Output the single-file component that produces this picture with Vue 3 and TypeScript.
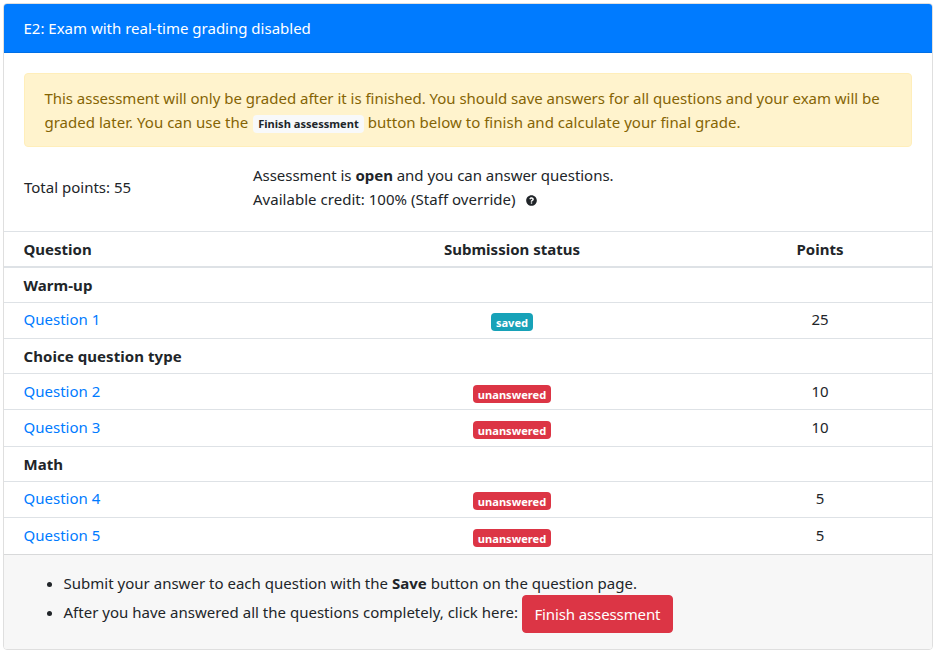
<script setup lang="ts">
interface Row {
  kind: 'category' | 'question'
  title: string
  height: number
  status?: 'saved' | 'unanswered'
  points?: number
}

const rows: Row[] = [
  { kind: 'category', title: 'Warm-up', height: 34 },
  { kind: 'question', title: 'Question 1', height: 36, status: 'saved', points: 25 },
  { kind: 'category', title: 'Choice question type', height: 35 },
  { kind: 'question', title: 'Question 2', height: 36, status: 'unanswered', points: 10 },
  { kind: 'question', title: 'Question 3', height: 37, status: 'unanswered', points: 10 },
  { kind: 'category', title: 'Math', height: 35 },
  { kind: 'question', title: 'Question 4', height: 36, status: 'unanswered', points: 5 },
  { kind: 'question', title: 'Question 5', height: 37, status: 'unanswered', points: 5 },
]
</script>

<template>
  <main class="card">
    <header class="card-header">E2: Exam with real-time grading disabled</header>

    <section class="card-body">
      <div class="alert">
        <div class="tight">This assessment will only be graded after it is finished. You should save answers for all questions and your exam will be</div>
        <div class="loose">graded later. You can use the <span class="badge light">Finish assessment</span> button below to finish and calculate your final grade.</div>
      </div>
      <div class="summary">
        <div class="total">Total points: 55</div>
        <div class="info">
          <div class="state">Assessment is <strong>open</strong> and you can answer questions.</div>
          <div class="credit">
            Available credit: 100% (Staff override)
            <svg class="help" viewBox="0 0 512 512" aria-hidden="true">
              <path fill="currentColor" d="M504 256c0 137-111 248-248 248S8 393 8 256C8 119.100 119 8 256 8s248 111.100 248 248zM262.700 110c-48 0-79 20-103 56-3.600 5.300-2.400 12.400 2.700 16.300l30 23c5.200 3.900 12.600 3 16.700-2.100 16-20 27-31 51-31 18 0 40 11.100 40 29 0 13-11 20-29 30C249 243 222 258 222 294v4c0 6.600 5.400 12 12 12h46c6.600 0 12-5.400 12-12v-1.300c0-25 74-27 74-96 0-52-54-90.700-103.300-90.700zM256 332c-22 0-40 18-40 40s18 40 40 40 40-18 40-40-18-40-40-40z" />
            </svg>
          </div>
        </div>
      </div>
    </section>

    <section class="table">
      <div class="row head">
        <div>Question</div>
        <div class="center">Submission status</div>
        <div class="center">Points</div>
      </div>
      <div
        v-for="row in rows"
        :key="row.title"
        class="row"
        :class="row.kind"
        :style="{ height: row.height + 'px' }"
      >
        <template v-if="row.kind === 'question'">
          <div><a class="link">{{ row.title }}</a></div>
          <div class="center"><span class="badge" :class="row.status">{{ row.status }}</span></div>
          <div class="center">{{ row.points }}</div>
        </template>
        <div v-else>{{ row.title }}</div>
      </div>
    </section>

    <footer class="card-footer">
      <ul>
        <li>Submit your answer to each question with the <strong>Save</strong> button on the question page.</li>
        <li>After you have answered all the questions completely, click here: <button class="btn" type="button">Finish assessment</button></li>
      </ul>
    </footer>
  </main>
</template>

<style>
body {
  background: #fff;
}
</style>

<style scoped>
* {
  box-sizing: border-box;
}
.card {
  width: 930px;
  height: 647px;
  margin: 3px 0 0 3px;
  display: flex;
  flex-direction: column;
  border: 1px solid #dfdfdf;
  border-radius: 4px;
  overflow: hidden;
  color: #212529;
  background: #fff;
  font: 15px/24px "Noto Sans", "Liberation Sans", sans-serif;
  white-space: nowrap;
}
.card-header {
  height: 49px;
  padding: 12px 19.5px;
  color: #fff;
  background: #007bff;
  border-bottom: 1px solid #006fe6;
}
.card-body {
  height: 178px;
  padding: 20px;
}
.alert {
  height: 74px;
  padding: 12px 19.4px;
  color: #856404;
  background: #fff3cd;
  border: 1px solid #ffeeba;
  border-radius: 4px;
}
.tight {
  letter-spacing: -0.018px;
}
.loose {
  letter-spacing: 0.03px;
}
.summary {
  display: flex;
  align-items: center;
  padding-top: 16px;
}
.total {
  width: 229px;
}
.state {
  letter-spacing: -0.03px;
}
.credit {
  display: flex;
  align-items: center;
  letter-spacing: 0.03px;
}
.help {
  width: 11px;
  height: 11px;
  margin: 2px 0 0 10px;
}
.row {
  display: grid;
  grid-template-columns: 312px 392px 224px;
  border-top: 1px solid #dee2e6;
  padding-top: 5px;
}
.row > div:first-child {
  padding-left: 19.5px;
}
.head {
  height: 37px;
  border-bottom: 2px solid #dee2e6;
  font-weight: 700;
}
.head + .row {
  border-top: 0;
}
.category {
  font-weight: 700;
  letter-spacing: 0.06px;
}
.row:nth-child(3),
.row:nth-child(8) {
  padding-top: 4px;
}
.center {
  text-align: center;
}
.link {
  color: #007bff;
}
.badge {
  display: inline-block;
  height: 18px;
  padding: 0 5px;
  border-radius: 4px;
  color: #fff;
  font-size: 11.1px;
  font-weight: 700;
  line-height: 19px;
  letter-spacing: 0;
}
.question .badge {
  display: block;
  width: fit-content;
  margin: 6px auto 0;
}
.light {
  margin-left: 1px;
  color: #212529;
  background: #f8f9fa;
  line-height: 18px;
}
.saved {
  background: #17a2b8;
}
.unanswered {
  background: #dc3545;
}
.card-footer {
  flex: 1;
  padding: 16px 20px 0;
  background: #f7f7f7;
  border-top: 1px solid #d8d9da;
}
ul {
  margin: 0;
  padding-left: 39.5px;
  letter-spacing: 0.014px;
}
.btn {
  width: 151px;
  height: 38px;
  padding: 0;
  border: 1px solid #dc3545;
  border-radius: 4px;
  color: #fff;
  background: #dc3545;
  font: inherit;
  letter-spacing: -0.12px;
  vertical-align: -2px;
}
</style>
